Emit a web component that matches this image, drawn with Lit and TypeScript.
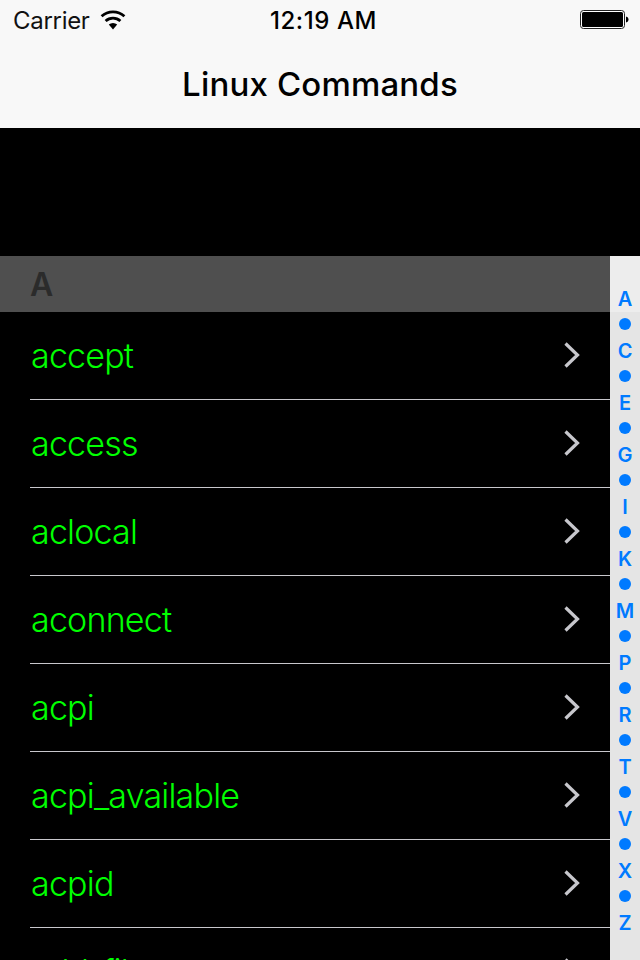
import { LitElement, html, css } from "lit";
import { customElement } from "lit/decorators.js";

const ROWS = ["accept", "access", "aclocal", "aconnect", "acpi", "acpi_available", "acpid", "add_file"];
const INDEX = ["A", "C", "E", "G", "I", "K", "M", "P", "R", "T", "V", "X", "Z"];

@customElement("app-root")
export class AppRoot extends LitElement {
  static styles = css`
    :host {
      display: block;
      width: 640px;
      height: 960px;
      overflow: hidden;
      background: #000;
      font-family: Inter, "Liberation Sans", sans-serif;
    }
    .bar {
      height: 128px;
      background: #f8f8f8;
      display: flex;
      flex-direction: column;
      color: #000;
    }
    .status {
      height: 40px;
      display: grid;
      grid-template-columns: 1fr auto 1fr;
      align-items: center;
      padding: 0 11px 0 13px;
    }
    .left {
      display: flex;
      align-items: center;
      gap: 10px;
      font-size: 24px;
      letter-spacing: -0.3px;
      color: #111;
    }
    .time {
      font-size: 24px;
      font-weight: 500;
      letter-spacing: 0.6px;
      padding-left: 5px;
    }
    .right {
      display: flex;
      justify-content: flex-end;
    }
    .title {
      height: 88px;
      display: flex;
      align-items: center;
      justify-content: center;
      font-size: 33px;
      font-weight: 500;
      letter-spacing: 0.17px;
    }
    .gap {
      height: 128px;
    }
    .main {
      display: flex;
      height: 704px;
    }
    .table {
      flex: 1;
      min-width: 0;
      overflow: hidden;
    }
    .header {
      height: 56px;
      background: #4f4f4f;
      color: #2b2b2b;
      font-size: 32px;
      font-weight: 600;
      display: flex;
      align-items: center;
      padding-left: 30px;
    }
    .row {
      height: 87px;
      margin-left: 30px;
      border-bottom: 1px solid #c8c7cc;
      display: flex;
      align-items: center;
      justify-content: space-between;
      padding-left: 1px;
      padding-right: 28px;
      color: #00ff00;
      font-size: 34px;
      font-weight: 350;
      letter-spacing: -0.8px;
    }
    .row:last-child {
      border-bottom: none;
    }
    .index {
      width: 30px;
      background: linear-gradient(#ededed 56px, #e5e5e5 56px);
      display: flex;
      flex-direction: column;
      align-items: center;
      justify-content: flex-start;
      padding-top: 30px;
      color: #007aff;
      font-size: 20px;
      font-weight: 600;
    }
    .index span {
      height: 26px;
      line-height: 26px;
    }
    .dot {
      width: 12px;
      height: 12px;
      border-radius: 50%;
      background: #007aff;
      margin: 6px 0 8px;
      flex: none;
    }
    svg {
      display: block;
      flex: none;
    }
  `;

  render() {
    return html`
      <div class="bar">
        <div class="status">
          <div class="left">
            Carrier
            <svg width="26" height="20" viewBox="0 0 26 20">
              <path d="M13 19.5 8.8 14.6a6.4 6.4 0 0 1 8.4 0z" fill="#000"></path>
              <path d="M5.6 11a11 11 0 0 1 14.8 0" fill="none" stroke="#000" stroke-width="2.8"></path>
              <path d="M1.6 6.2a17 17 0 0 1 22.8 0" fill="none" stroke="#000" stroke-width="2.8"></path>
            </svg>
          </div>
          <div class="time">12:19 AM</div>
          <div class="right">
            <svg width="49" height="20" viewBox="0 0 49 20">
              <rect x="0.5" y="0.5" width="44" height="18" rx="3" fill="#fff" stroke="#222"></rect>
              <rect x="2" y="2" width="41" height="15" rx="1.5" fill="#000"></rect>
              <path d="M46 6.5c1.6.3 2.5 1.6 2.5 3s-.9 2.7-2.5 3z" fill="#000"></path>
            </svg>
          </div>
        </div>
        <div class="title">Linux Commands</div>
      </div>
      <div class="gap"></div>
      <div class="main">
        <div class="table">
          <div class="header">A</div>
          ${ROWS.map(
            (r) => html`<div class="row">
              <span>${r}</span>
              <svg width="20" height="28" viewBox="0 0 20 28">
                <path d="M3.5 1.5 15.5 13 3.5 24.5" fill="none" stroke="#c7c7cc" stroke-width="3.2"></path>
              </svg>
            </div>`
          )}
        </div>
        <div class="index">
          ${INDEX.map(
            (l, i) => html`<span>${l}</span>${i < INDEX.length - 1 ? html`<div class="dot"></div>` : ""}`
          )}
        </div>
      </div>
    `;
  }
}
